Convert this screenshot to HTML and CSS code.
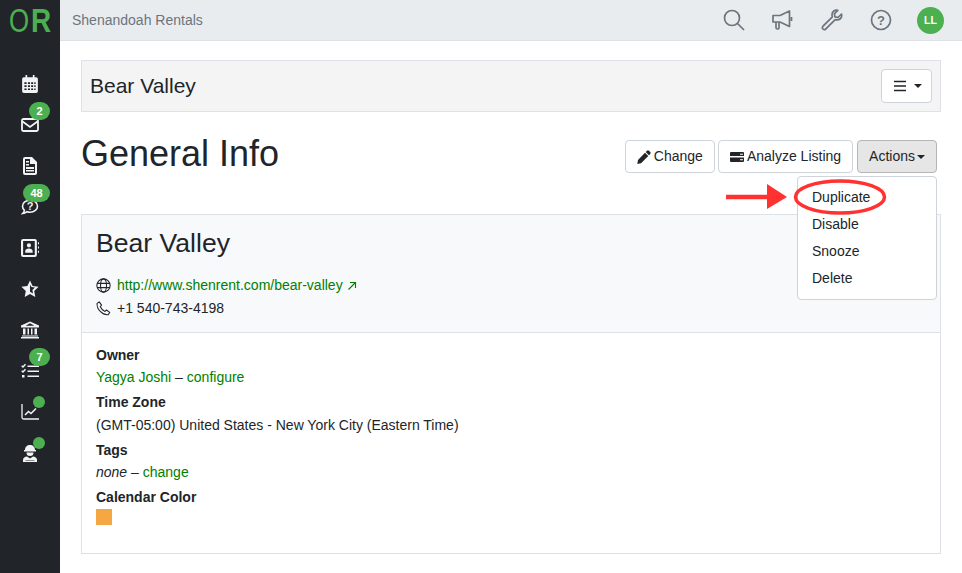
FILE: index.html
```html
<!DOCTYPE html>
<html lang="en">
<head>
<meta charset="utf-8">
<title>Bear Valley</title>
<link rel="stylesheet" href="styles.css">
</head>
<body>
<div class="app">
  <aside class="sidebar">
    <div class="logo"><span class="logo-o">O</span><span class="logo-r">R</span></div>
    <nav class="side-nav">
      <a class="side-item"><svg class="side-icon" viewBox="0 0 16 16"><path fill="#f1f3f5" d="M4 0h1.500v2h5V0H12v2h1.500A1.500 1.500 0 0 1 15 3.500v11a1.500 1.500 0 0 1-1.500 1.500h-11A1.500 1.500 0 0 1 1 14.500v-11A1.500 1.500 0 0 1 2.500 2H4zM3 6.500v1.500h2V6.500zm3.200 0v1.500h1.800V6.500zm2.800 0v1.500h1.800V6.500zm2.800 0v1.500H13V6.500zM3 9.200v1.500h2V9.200zm3.200 0v1.500h1.800V9.200zm2.800 0v1.500h1.800V9.200zm2.800 0v1.500H13V9.200zM3 11.900v1.500h2v-1.500zm3.200 0v1.500h1.800v-1.500zm2.800 0v1.500h1.800v-1.500zm2.800 0v1.500H13v-1.500z" fill-rule="evenodd"/></svg></a>
      <a class="side-item"><svg class="side-icon" viewBox="0 0 18 14"><rect x="1" y="1" width="16" height="12" rx="1.500" fill="none" stroke="#f1f3f5" stroke-width="1.800"/><path d="M1.500 3.500 9 9l7.500-5.500" fill="none" stroke="#f1f3f5" stroke-width="1.800"/></svg><span class="badge">2</span></a>
      <a class="side-item"><svg class="side-icon" viewBox="0 0 14 18"><path fill="#f1f3f5" fill-rule="evenodd" d="M2 0h7l5 5v11a2 2 0 0 1-2 2H2a2 2 0 0 1-2-2V2a2 2 0 0 1 2-2zm0 2v14h10V7H7V2zm1 2h3v1.500H3zm0 3h3v1.500H3zm0 3h8v2H3zm0 3h8v1.500H3z"/></svg></a>
      <a class="side-item"><svg class="side-icon" viewBox="0 0 18 16"><path fill="none" stroke="#f1f3f5" stroke-width="1.600" d="M9 1.200c4.300 0 7.500 2.700 7.500 6s-3.200 6-7.500 6c-1.100 0-2.100-.2-3-.5-1.200.9-2.700 1.700-4.300 1.800.9-.9 1.500-2 1.700-3.200C2.300 10.200 1.500 8.800 1.500 7.200c0-3.300 3.200-6 7.500-6z"/><text x="9" y="11" text-anchor="middle" class="q-mark">?</text></svg><span class="badge badge-wide">48</span></a>
      <a class="side-item"><svg class="side-icon" viewBox="0 0 17 17"><path fill="#f1f3f5" fill-rule="evenodd" d="M2 0h11a2 2 0 0 1 2 2v13a2 2 0 0 1-2 2H2a2 2 0 0 1-2-2V2a2 2 0 0 1 2-2zm0 2v13h11V2zm5.500 2a2 2 0 1 1 0 4 2 2 0 0 1 0-4zM4 13v-1.500C4 10 5.500 9 7.500 9s3.500 1 3.500 2.500V13zM16 3h1v2h-1zm0 4h1v2h-1zm0 4h1v2h-1z"/></svg></a>
      <a class="side-item"><svg class="side-icon" viewBox="0 0 18 17"><path fill="#f1f3f5" fill-rule="evenodd" d="M9 0l2.600 5.500 6 .8-4.400 4.200 1.100 6L9 13.600 3.700 16.500l1.100-6L.4 6.300l6-.8zm0 4.200v7.100l3 1.600-.6-3.400 2.500-2.400-3.400-.5z"/></svg></a>
      <a class="side-item"><svg class="side-icon" viewBox="0 0 18 17"><path fill="#f1f3f5" fill-rule="evenodd" d="M9 0l9 4v2H0V4zm0 1.800L5 3.900v.4h8v-.4zM2 7h2.500v6H2zm4.500 0H8v6H6.500zM10 7h1.500v6H10zm3.500 0H16v6h-2.500zM1 14h16v1H1zM0 15.500h18V17H0z"/></svg></a>
      <a class="side-item"><svg class="side-icon" viewBox="0 0 18 15"><path fill="none" stroke="#f1f3f5" stroke-width="1.500" d="M.7 2.200l1.300 1.300L4.500.8M.7 7.200l1.300 1.300 2.500-2.700"/><path fill="#f1f3f5" d="M6.500 2h11.500v1.600H6.500zm0 5h11.500v1.600H6.500zm0 5h11.500v1.600H6.500zM1 11.500h2.500v2.500H1z"/></svg><span class="badge">7</span></a>
      <a class="side-item"><svg class="side-icon" viewBox="0 0 18 16"><path fill="none" stroke="#f1f3f5" stroke-width="1.300" d="M1 0v13.500a1.500 1.500 0 0 0 1.500 1.500H18"/><path fill="none" stroke="#f1f3f5" stroke-width="1.600" d="M4 11l3.500-3.500 2.500 2L15 4.500"/></svg><span class="dot"></span></a>
      <a class="side-item"><svg class="side-icon" viewBox="0 0 16 18"><path fill="#f1f3f5" fill-rule="evenodd" d="M3 6C3 3 5 1 8 1s5 2 5 5h1v1.500H2V6zM4.500 8.500h7a3.500 3.500 0 0 1-7 0zM1 18v-2c0-2 2-3.500 4-3.500l3 2 3-2c2 0 4 1.500 4 3.500v2zm2.500-2v.5h9V16z"/></svg><span class="dot"></span></a>
    </nav>
  </aside>
  <div class="main">
    <header class="topbar">
      <span class="org-name">Shenandoah Rentals</span>
      <div class="top-icons">
        <svg class="top-icon" viewBox="0 0 22 22"><circle cx="9" cy="9" r="7.500" fill="none" stroke="#6c757d" stroke-width="1.700"/><path d="M14.500 14.500 21 21" stroke="#6c757d" stroke-width="1.700" fill="none"/></svg>
        <svg class="top-icon" viewBox="0 0 22 22"><path fill="none" stroke="#6c757d" stroke-width="1.700" stroke-linejoin="round" d="M1 6.500h7L17.500 2v15.500L8 13H1zM19.500 8v4M4 13v5.500a1.500 1.500 0 0 0 3 0V13"/></svg>
        <svg class="top-icon" viewBox="0 0 22 22"><path fill="none" stroke="#6c757d" stroke-width="1.700" stroke-linejoin="round" d="M20.500 5l-3.500 3.500-3-.7-.7-3L16.800 1.300C14 .5 10.800 2.300 11 6c0 .8.200 1.300.4 1.800L1.800 17.400a2 2 0 0 0 2.800 2.800l9.600-9.600c4 1.300 7.400-1.700 6.300-5.600z"/></svg>
        <svg class="top-icon" viewBox="0 0 22 22"><circle cx="11" cy="11" r="9.500" fill="none" stroke="#6c757d" stroke-width="1.700"/><text x="11" y="15.500" text-anchor="middle" class="help-mark">?</text></svg>
        <span class="avatar">LL</span>
      </div>
    </header>
    <main class="content">
      <section class="title-panel">
        <h2 class="panel-title">Bear Valley</h2>
        <button class="btn menu-btn"><svg class="bars" viewBox="0 0 14 12"><path d="M1 1.500h12M1 6h12M1 10.500h12" stroke="#212529" stroke-width="1.400"/></svg><span class="caret"></span></button>
      </section>
      <section class="page-head">
        <h1 class="page-title">General Info</h1>
        <div class="actions">
          <button class="btn"><svg class="btn-icon" viewBox="0 0 14 14"><path fill="#212529" d="M10 .8a1.500 1.500 0 0 1 2 0l1.200 1.200a1.500 1.500 0 0 1 0 2L12 5.300 8.700 2zM8 2.700 11.300 6 4 13.300.3 14 1 10z"/></svg>Change</button>
          <button class="btn"><svg class="btn-icon" viewBox="0 0 14 12"><path fill="#212529" fill-rule="evenodd" d="M1 1h12a1 1 0 0 1 1 1v3H0V2a1 1 0 0 1 1-1zm9 1.800v1h3v-1zM0 6.500h14V10a1 1 0 0 1-1 1H1a1 1 0 0 1-1-1zm10 1.800v1h3v-1z"/></svg>Analyze Listing</button>
          <div class="dropdown">
            <button class="btn btn-active">Actions<span class="caret"></span></button>
            <ul class="menu">
              <li>Duplicate</li>
              <li>Disable</li>
              <li>Snooze</li>
              <li>Delete</li>
            </ul>
            <svg class="callout" viewBox="0 0 220 50"><path d="M0 25h44" stroke="#ff3131" stroke-width="4.500" fill="none"/><path d="M41 12l20 13-20 12z" fill="#ff3131"/><ellipse cx="114" cy="25" rx="44.500" ry="16" fill="none" stroke="#ff3131" stroke-width="3.500"/></svg>
          </div>
        </div>
      </section>
      <section class="card">
        <div class="card-head">
          <h3 class="card-title">Bear Valley</h3>
          <div class="contact"><svg class="contact-icon" viewBox="0 0 14 14"><g fill="none" stroke="#212529" stroke-width="1"><circle cx="7" cy="7" r="6.200"/><ellipse cx="7" cy="7" rx="2.800" ry="6.200"/><path d="M1 5h12M1 9h12"/></g></svg><a class="link">http://www.shenrent.com/bear-valley</a><svg class="ext-icon" viewBox="0 0 10 10"><path d="M1.500 8.500 8.500 1.500M3 1.500h5.500V7" fill="none" stroke="#008000" stroke-width="1.100"/></svg></div>
          <div class="contact"><svg class="contact-icon" viewBox="0 0 14 14"><path fill="none" stroke="#212529" stroke-width="1" stroke-linejoin="round" d="M1 2.200 3 .8l2.200 3-1.300 1.400c.8 2 2.200 3.400 4.500 4.500l1.400-1.300 3 2.200-1.400 2.200C6 13.500.5 7.500 1 2.200z"/></svg><span>+1 540-743-4198</span></div>
        </div>
        <div class="card-body">
          <div class="field-label">Owner</div>
          <div class="field-value"><a class="link">Yagya Joshi</a> – <a class="link">configure</a></div>
          <div class="field-label">Time Zone</div>
          <div class="field-value field-value-low">(GMT-05:00) United States - New York City (Eastern Time)</div>
          <div class="field-label">Tags</div>
          <div class="field-value"><em>none</em> – <a class="link">change</a></div>
          <div class="field-label">Calendar Color</div>
          <div class="swatch"></div>
        </div>
      </section>
    </main>
  </div>
</div>
</body>
</html>
```
FILE: styles.css
```css
* { box-sizing: border-box; }
html, body { margin: 0; height: 100%; overflow: hidden; }
body { font-family: "Liberation Sans", Arial, sans-serif; font-size: 14px; line-height: 21px; color: #212529; background: #fff; }
.app { display: flex; height: 573px; }

.sidebar { width: 60px; flex: none; background: #212529; }
.logo { display: flex; height: 41px; padding: 1px 0 0 9px; color: #4caf50; font-size: 34px; line-height: 38px; white-space: nowrap; }
.logo-o { display: block; width: 22px; transform: scaleX(.76); transform-origin: left center; }
.logo-r { display: block; width: 20px; font-weight: 700; transform: scaleX(.82); transform-origin: left center; }
.side-nav { display: flex; flex-direction: column; padding-top: 22px; }
.side-item { position: relative; height: 41px; display: flex; align-items: center; justify-content: center; }
.side-icon { width: 18px; height: 18px; display: block; }
.q-mark { font-size: 11px; font-weight: 700; fill: #f1f3f5; }
.badge { position: absolute; top: -2px; left: 29px; min-width: 21px; height: 18px; padding: 0 6px; border-radius: 9px; background: #4caf50; color: #fff; font-size: 11px; font-weight: 700; line-height: 18px; text-align: center; }
.badge-wide { left: 23px; width: 27px; }
.dot { position: absolute; top: 5px; left: 33px; width: 12px; height: 12px; border-radius: 50%; background: #4caf50; }

.main { flex: 1; min-width: 0; display: flex; flex-direction: column; }
.topbar { height: 41px; flex: none; display: flex; align-items: center; justify-content: space-between; padding: 0 18px 0 12px; background: #e9ecef; border-bottom: 1px solid #dee2e6; }
.org-name { color: #6c757d; font-size: 14px; }
.top-icons { display: flex; align-items: center; gap: 27px; }
.top-icon { width: 22px; height: 22px; display: block; }
.help-mark { font-size: 13px; font-weight: 700; fill: #6c757d; }
.avatar { width: 27px; height: 27px; margin-left: -2px; border-radius: 50%; background: #4caf50; color: #fff; font-size: 10.500px; font-weight: 700; line-height: 27px; text-align: center; }

.content { padding: 19px 21px 0; }
.title-panel { height: 52px; display: flex; align-items: center; justify-content: space-between; padding: 0 8px; background: #f4f4f5; border: 1px solid #dee2e6; }
.panel-title { margin: 0; font-size: 21px; font-weight: 400; line-height: 26px; }

.btn { display: inline-flex; align-items: center; height: 33px; padding: 0 11px; border: 1px solid #ced4da; border-radius: 4px; background: #fff; color: #212529; font: inherit; white-space: nowrap; }
.menu-btn { width: 51px; height: 34px; padding: 0 0 0 11px; }
.bars { width: 14px; height: 12px; display: block; margin-right: 5px; }
.caret { display: inline-block; width: 0; height: 0; margin-left: 2px; border-top: 4px solid #212529; border-left: 4px solid transparent; border-right: 4px solid transparent; }

.page-head { display: flex; align-items: flex-start; justify-content: space-between; padding: 20px 4px 0 0; height: 102px; }
.page-title { margin: 0; font-size: 36px; font-weight: 400; line-height: 43px; }
.actions { display: flex; gap: 3px; padding-top: 8px; }
.btn-icon { width: 14px; height: 14px; display: block; margin-right: 3px; }
.dropdown { position: relative; margin-left: 1px; }
.btn-active { background: #e6e6e6; border-color: #b5b5b5; }
.menu { position: absolute; z-index: 3; top: 36px; right: 0; width: 140px; height: 124px; margin: 0; padding: 7px 0 0; list-style: none; background: #fff; border: 1px solid #ced4da; border-radius: 4px; }
.menu li { height: 27px; padding-left: 14px; line-height: 27px; }
.callout { position: absolute; z-index: 4; top: 32px; right: -9px; width: 220px; height: 50px; }

.card { height: 340px; border: 1px solid #dee2e6; }
.card-head { height: 118px; padding: 11px 14px 0; background: #f8f9fa; border-bottom: 1px solid #dee2e6; }
.card-title { margin: 0 0 14px; font-size: 26.600px; font-weight: 400; line-height: 34px; }
.contact { display: flex; align-items: center; height: 23px; }
.contact-icon { width: 15px; height: 15px; margin-right: 6px; flex: none; }
.ext-icon { width: 10px; height: 10px; margin-left: 4px; }
.link { color: #008000; }
.card-body { padding: 12px 14px; }
.field-label { font-weight: 700; line-height: 21px; margin-top: 4px; }
.field-label:first-child { margin-top: 0; }
.field-value { line-height: 21px; margin-top: 1px; }
.field-value-low { margin-top: 2px; }
.swatch { width: 16px; height: 16px; margin-top: 1px; background: #f4a742; }
```
